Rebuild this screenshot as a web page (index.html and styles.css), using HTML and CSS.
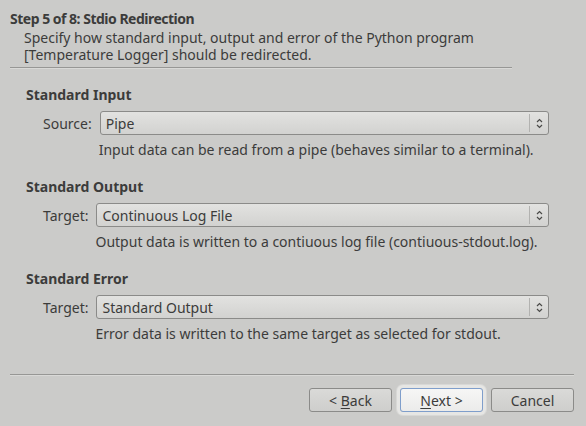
FILE: index.html
```html
<!DOCTYPE html>
<html>
<head>
<meta charset="utf-8">
<link rel="stylesheet" href="styles.css">
</head>
<body>
<div class="wizard">
  <header class="head">
    <div class="title">Step 5 of 8: Stdio Redirection</div>
    <div class="subtitle">Specify how standard input, output and error of the Python program<br>[Temperature Logger] should be redirected.</div>
  </header>
  <div class="rule top-rule"></div>
  <main class="content">
    <section class="group">
      <div class="group-title">Standard Input</div>
      <div class="form">
        <span class="label">Source:</span>
        <div class="combo"><span class="combo-text">Pipe</span><span class="combo-btn"><svg width="7" height="11" viewBox="0 0 7 11"><path d="M1 4 L3.5 1.5 L6 4 M1 7 L3.5 9.5 L6 7" fill="none" stroke="#4a4a48" stroke-width="1.2"/></svg></span></div>
        <span></span>
        <div class="desc">Input data can be read from a pipe (behaves similar to a terminal).</div>
      </div>
    </section>
    <section class="group">
      <div class="group-title">Standard Output</div>
      <div class="form">
        <span class="label">Target:</span>
        <div class="combo"><span class="combo-text">Continuous Log File</span><span class="combo-btn"><svg width="7" height="11" viewBox="0 0 7 11"><path d="M1 4 L3.5 1.5 L6 4 M1 7 L3.5 9.5 L6 7" fill="none" stroke="#4a4a48" stroke-width="1.2"/></svg></span></div>
        <span></span>
        <div class="desc">Output data is written to a contiuous log file (contiuous-stdout.log).</div>
      </div>
    </section>
    <section class="group">
      <div class="group-title">Standard Error</div>
      <div class="form">
        <span class="label">Target:</span>
        <div class="combo"><span class="combo-text">Standard Output</span><span class="combo-btn"><svg width="7" height="11" viewBox="0 0 7 11"><path d="M1 4 L3.5 1.5 L6 4 M1 7 L3.5 9.5 L6 7" fill="none" stroke="#4a4a48" stroke-width="1.2"/></svg></span></div>
        <span></span>
        <div class="desc">Error data is written to the same target as selected for stdout.</div>
      </div>
    </section>
  </main>
  <div class="rule bottom-rule"></div>
  <footer class="buttons">
    <button class="btn">&lt; <u>B</u>ack</button>
    <button class="btn default"><u>N</u>ext &gt;</button>
    <button class="btn">Cancel</button>
  </footer>
</div>
</body>
</html>
```
FILE: styles.css
```css
html, body {
  margin: 0;
  padding: 0;
  background: #cbcbc9;
}
body {
  width: 586px;
  height: 426px;
  overflow: hidden;
  font-family: "Noto Sans", "Open Sans", sans-serif;
  font-size: 14px;
  color: #3c3c3b;
}
.wizard {
  display: flex;
  flex-direction: column;
}
.head {
  padding: 9px 0 0 10px;
}
.title {
  font-weight: bold;
  font-size: 14px;
  letter-spacing: -0.5px;
  line-height: 20px;
}
.subtitle {
  padding-left: 14px;
  line-height: 17px;
}
.rule {
  height: 1px;
  background: #979795;
  border-bottom: 1px solid #d9d9d7;
}
.top-rule {
  margin: 4px 0 0 10px;
  width: 502px;
}
.content {
  padding: 17px 0 0 26px;
  height: 305px;
  box-sizing: border-box;
}
.group {
  height: 92px;
}
.group-title {
  font-weight: bold;
  line-height: 18px;
}
.form {
  display: grid;
  grid-template-columns: auto 1fr;
  column-gap: 8px;
  row-gap: 7px;
  padding: 7px 37px 0 17px;
  align-items: center;
}
.label {
  text-align: right;
}
.combo {
  height: 24px;
  box-sizing: border-box;
  border: 1px solid #8b8b89;
  border-radius: 3px;
  background: linear-gradient(#e2e2e0, #d2d2d0);
  display: flex;
  align-items: center;
}
.combo-text {
  flex: 1;
  padding-left: 5px;
}
.combo-btn {
  width: 18px;
  height: 18px;
  border-left: 1px solid #b2b2b0;
  display: flex;
  align-items: center;
  justify-content: center;
}
.desc {
  line-height: 16px;
  margin-left: -1px;
}
.bottom-rule {
  margin: 0 12px 0 10px;
}
.buttons {
  display: flex;
  justify-content: flex-end;
  align-items: center;
  gap: 8px;
  padding: 12px 12px 0 0;
}
.btn {
  width: 83px;
  height: 24px;
  box-sizing: border-box;
  border: 1px solid #8b8b89;
  border-radius: 3px;
  background: linear-gradient(#dadad8, #cececc);
  font-family: inherit;
  font-size: 14px;
  color: #3c3c3b;
  padding: 0;
}
.btn.default {
  background: linear-gradient(#f6f6f5, #ebebea);
  border-color: #7f9ecb;
  box-shadow: 0 0 0 3px #e6e6e4, 0 0 0 4px #d8d8d6;
}
u {
  text-underline-offset: 2px;
}
```
